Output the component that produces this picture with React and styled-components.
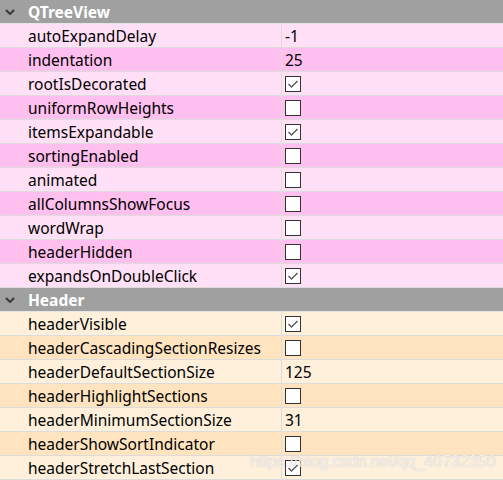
import React from 'react';
import styled, { createGlobalStyle } from 'styled-components';

const GlobalStyle = createGlobalStyle`
 html, body {
  margin: 0;
  padding: 0;
  background: #ffffff;
 }
 body {
  font-family: "Noto Sans", "Open Sans", "Liberation Sans", sans-serif;
  font-size: 15.5px;
  color: #000;
 }
`;

const Table = styled.div`
 position: relative;
 width: 503px;
 display: flex;
 flex-direction: column;
`;

const GroupHeader = styled.div`
 height: 23px;
 border-bottom: 1px solid #e6e6e6;
 background-color: #a0a0a0;
 display: flex;
 align-items: center;
 color: #ffffff;
 font-weight: bold;
 font-size: 15.5px;
`;

const Arrow = styled.svg`
 width: 10px;
 height: 8px;
 margin: 0 13px 0 5px;
`;

const Row = styled.div`
 display: grid;
 grid-template-columns: 282px 1fr;
 height: 23px;
 border-bottom: 1px solid #dcdcdc;
 background-color: ${p => p.$bg};
`;

const NameCell = styled.div`
 display: flex;
 align-items: center;
 padding-left: 28px;
 border-right: 1px solid #dcdcdc;
 white-space: nowrap;
 overflow: hidden;
`;

const ValueCell = styled.div`
 display: flex;
 align-items: center;
 padding-left: 3px;
`;

const Box = styled.span`
 width: 16px;
 height: 16px;
 box-sizing: border-box;
 border: 1px solid #333333;
 background: #ffffff;
 display: flex;
 align-items: center;
 justify-content: center;
`;

const Watermark = styled.div`
 position: absolute;
 left: 250px;
 bottom: 9px;
 font-family: "Liberation Sans", Arial, sans-serif;
 font-size: 16px;
 line-height: 18px;
 color: rgba(255, 255, 255, 0.8);
 text-shadow: 0 0 1px rgba(120, 120, 120, 0.5);
 pointer-events: none;
 white-space: nowrap;
`;

const Check = ({ on }) => (
 <Box>
  {on && (
   <svg width="14" height="14" viewBox="0 0 14 14">
    <polyline points="2.5,7 5.5,10 11.5,4" fill="none" stroke="#555" strokeWidth="1.4" />
   </svg>
  )}
 </Box>
);

const groups = [
 {
  title: 'QTreeView',
  colors: ['#ffe0f6', '#ffbfef'],
  rows: [
   ['autoExpandDelay', '-1'],
   ['indentation', '25'],
   ['rootIsDecorated', true],
   ['uniformRowHeights', false],
   ['itemsExpandable', true],
   ['sortingEnabled', false],
   ['animated', false],
   ['allColumnsShowFocus', false],
   ['wordWrap', false],
   ['headerHidden', false],
   ['expandsOnDoubleClick', true],
  ],
 },
 {
  title: 'Header',
  colors: ['#fff0dc', '#ffe4bf'],
  rows: [
   ['headerVisible', true],
   ['headerCascadingSectionResizes', false],
   ['headerDefaultSectionSize', '125'],
   ['headerHighlightSections', false],
   ['headerMinimumSectionSize', '31'],
   ['headerShowSortIndicator', false],
   ['headerStretchLastSection', true],
  ],
 },
];

const App = () => (
 <>
  <GlobalStyle />
  <Table>
   {groups.map(g => (
    <React.Fragment key={g.title}>
     <GroupHeader>
      <Arrow viewBox="0 0 10 8">
       <polyline points="1,2 5,6 9,2" fill="none" stroke="#333" strokeWidth="1.8" />
      </Arrow>
      {g.title}
     </GroupHeader>
     {g.rows.map(([name, val], i) => (
      <Row key={name} $bg={g.colors[i % 2]}>
       <NameCell>{name}</NameCell>
       <ValueCell>
        {typeof val === 'boolean' ? <Check on={val} /> : val}
       </ValueCell>
      </Row>
     ))}
    </React.Fragment>
   ))}
   <Watermark>https://blog.csdn.net/qq_40732350</Watermark>
  </Table>
 </>
);

export default App;
